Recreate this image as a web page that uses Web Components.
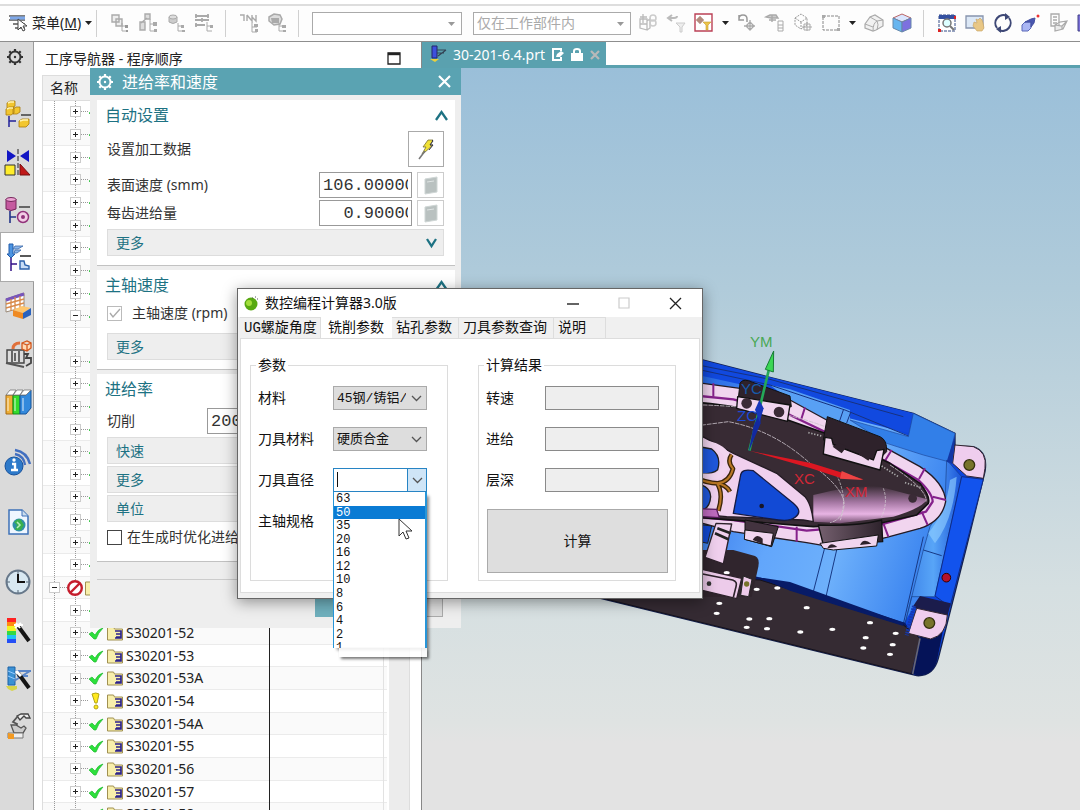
<!DOCTYPE html>
<html lang="zh-CN">
<head>
<meta charset="utf-8">
<title>30-201-6.4.prt</title>
<style>
  html, body { margin: 0; height: 100%; overflow: hidden; }
  body { font: 14px/20px "Noto Sans", "Noto Sans CJK SC", sans-serif; color: #222; background: #fff; }
</style>
</head>
<body>
<nx-app></nx-app>
<script>
const ICONS = {
  menu: '<path d="M1 3h16M1 7h16M5 11h12M7 15h10" stroke="#555" stroke-width="1.6"/><path d="M2 5h15" stroke="#7da7e8" stroke-width="3"/><path d="M10 6v11l3-3 2 4 2-1-2-4h4z" fill="#fff" stroke="#444"/>',
  t1: '<path d="M2 2h7v7H2zM6 6h6v7H6z" fill="#eee" stroke="#aaa" stroke-width="1.4"/><path d="M12 10v8h5M12 13h4" stroke="#aaa" fill="none"/><path d="M15 12h3v3h-3zM16 17h2v2h-2z" fill="#999"/>',
  t2: '<path d="M2 9h5v8H2zM7 1h5v5H7zM9 5l-6 5" fill="#ddd" stroke="#aaa" stroke-width="1.4"/><path d="M12 6v12h5M12 11h5" stroke="#aaa" fill="none"/><path d="M15 9h4v4h-4zM16 16h3v3h-3z" fill="#aaa"/>',
  t3: '<path d="M3 4v5q4 3 8 0V4" fill="#ccc" stroke="#aaa"/><ellipse cx="7" cy="4" rx="4" ry="2" fill="#ddd" stroke="#aaa"/><path d="M12 10v8h5M12 13h4" stroke="#aaa" fill="none"/><path d="M15 12h3v3h-3zM16 17h3v2h-3z" fill="#aaa"/>',
  t4: '<path d="M1 3h14M1 7h14M1 12h10M2 1v4M14 1v4M2 10v4M8 5v4" stroke="#aaa" stroke-width="1.8"/><path d="M13 9v9h5M13 13h4" stroke="#aaa" fill="none"/><path d="M16 12h3v3h-3z" fill="#aaa"/>',
  t5: '<path d="M1 2h4v6M8 2v6M8 2l5 6V2M17 2v6l-4-4" stroke="#aaa" stroke-width="1.4" fill="none"/><path d="M13 9v10h5M13 14h5" stroke="#aaa" fill="none"/><path d="M15 11h4v3h-4zM16 16h3v3h-3z" fill="#aaa"/>',
  t6: '<path d="M2 4l5-3 6 1 2 4-2 5-6 1-5-4z" fill="#ddd" stroke="#aaa" stroke-width="1.5"/><path d="M4 5h8v5H5z" fill="#aaa"/><path d="M12 10v8h5M12 13h4" stroke="#aaa" fill="none"/><path d="M15 12h4v3h-4zM16 17h3v2h-3z" fill="#aaa"/>',
  u1: '<path d="M2 6h7v5H2zM2 11h7v6l-7-2zM9 8l3-2v9l-3 2M5 1v9M2 4h7" fill="none" stroke="#bbb" stroke-width="1.3"/><circle cx="15" cy="5" r="3" fill="none" stroke="#ccc" stroke-width="1.6"/><circle cx="15" cy="10" r="3" fill="none" stroke="#ccc" stroke-width="1.6"/>',
  u2: '<path d="M6 2L2 5l4 3M2 5h6q3 0 3-2" fill="none" stroke="#bbb" stroke-width="2"/><path d="M10 10h9l-3 4v5h-2v-5z" fill="#eee" stroke="#ccc"/>',
  filter: '<path d="M1 1h17v17H1z" fill="#fff" stroke="#bb4055" stroke-width="1.4"/><path d="M6 3v8M2 7h8M4 5h4v4H4z" fill="none" stroke="#965"/><path d="M9 9h8l-3 3v5h-2v-5z" fill="#ecc54a" stroke="#c79c2e" stroke-width=".6"/>',
  u3: '<path d="M2 6q0-4 4-4t4 4v3M2 2v5h5" fill="none" stroke="#999" stroke-width="1.5"/><path d="M13 7v11M7 13h11M13 9l4 4-4 4-4-4z" fill="none" stroke="#aaa" stroke-width="1.3"/>',
  u4: '<path d="M1 4l4-2h6l2 3H6zM7 2v7M4 7h7" fill="#ccc" stroke="#aaa" stroke-width="1.4"/><path d="M13 8h5v10h-5zM13 12h5M13 15h5" fill="none" stroke="#aaa"/>',
  u5: '<path d="M2 5l6-4 6 4v7l-6 4-6-4zM2 5l6 4 6-4M8 9v7" fill="none" stroke="#999" stroke-dasharray="2 1"/><path d="M14 9v9M9 14h10M11 11h6v6h-6z" fill="none" stroke="#aaa"/>',
  u6: '<path d="M2 3h16v14H2z" fill="none" stroke="#888" stroke-dasharray="3 1"/><path d="M1 2h3v3H1zM16 15h3v3h-3z" fill="#aaa"/>',
  u7: '<path d="M1 11l5-7 5-2 8 5v6l-7 4-3 1-8-3z" fill="#f1f1f1" stroke="#aaa" stroke-width="1.2"/><path d="M6 4l7 4q-4 2-4 10M13 8l6-1M13 8q2 3 0 9M1 11l8 3" stroke="#aaa"/>',
  cube: '<path d="M1 5l9-4 9 4-9 4z" fill="#d9e6ff" stroke="#b66"/><path d="M1 5l9 4v10l-9-4z" fill="#67b5ef" stroke="#68a"/><path d="M19 5l-9 4v10l9-4z" fill="#7d71df" stroke="#68a"/>',
  v1: '<path d="M2 2h16v16H2z" fill="#fff" stroke="#334a86" stroke-dasharray="3 1"/><path d="M2 2h16v4H2z" fill="#3450a0"/><circle cx="10" cy="10" r="4" fill="#dff" stroke="#777" stroke-width="1.5"/><path d="M13 13l4 4" stroke="#777" stroke-width="2"/><path d="M17 3h2v3h-2zM1 16h3v3H1z" fill="#d22"/>',
  v2: '<path d="M1 3h17v12H1z" fill="#dce8f6" stroke="#8794ad" stroke-width="1.3"/><path d="M9 9l3 1-1-4 2 1 2-2 2 2 1 3 1 5-2 3h-5l-4-5z" fill="#e8c786" stroke="#c6a15f" stroke-width=".6"/>',
  v3: '<path d="M4 15A8 8 0 0 1 14 3M16 5A8 8 0 0 1 6 17" fill="none" stroke="#3e4876" stroke-width="2"/><path d="M12 0l5 4-5 3zM8 20l-5-4 5-3z" fill="#3e4876"/>',
  v4: '<path d="M1 12l3-3h6v6l-3 3H1z" fill="#aab6f4" stroke="#5a68b8"/><path d="M4 9l6-3 4-1-1 5-3 4V9z" fill="#4a57b0" stroke="#4450a0"/><circle cx="17" cy="3" r="1.5" fill="#e33"/>',
  v5: '<path d="M2 1h8v12H2zM4 4h4M4 7h4M4 10h4" fill="none" stroke="#aaa" stroke-width="1.3"/><path d="M6 12l5-3 7-1-4 8-8 2zM6 12l7 1 5-5M13 13v3" fill="#ececec" stroke="#aaa" stroke-width="1.2"/>',
  v6: '<path d="M1 2h10v16H1z" fill="#7a6fd8" stroke="#448"/>',
  gear: '<g fill="none" stroke="currentColor"><circle cx="10" cy="10" r="5.5" stroke-width="2"/><path d="M10 2v3M10 15v3M2 10h3M15 10h3M4.300 4.300l2 2M13.700 13.700l2 2M4.300 15.700l2-2M13.700 6.300l2-2" stroke-width="2.200"/></g><circle cx="10" cy="10" r="1.200" fill="currentColor"/>',
  asm: '<path d="M4 15V26M4 20h7" stroke="#229" stroke-width="1.5"/><path d="M16 14h10" stroke="#333" stroke-width="1.4"/><g fill="#f2c62f" stroke="#a97b0c" stroke-width=".8"><path d="M2 2l3-2h5v5l-3 2H2zM1 8l3-2h5v6l-3 2H1zM8 8l3-2h4v5l-3 2H8zM14 20l3-2h7v5l-3 3h-7z"/></g><path d="M3 2l2-1h4M2 8l2-1h4M15 20l3-1h5" stroke="#fff3b0" stroke-width="1.4"/>',
  cons: '<path d="M2 1l9 6-9 6zM24 1l-9 6 9 6z" fill="#1216c4"/><path d="M13 0v27" stroke="#222" stroke-dasharray="5 2"/><path d="M0 16h10v10H0z" fill="#ffed2b" stroke="#333"/><path d="M15 15v11h10z" fill="#c01818" stroke="#711"/>',
  part: '<path d="M1 2v10q5 3 10 0V2" fill="#c55a9f" stroke="#75265b"/><ellipse cx="6" cy="2.500" rx="5" ry="2" fill="#eea5d4" stroke="#75265b"/><path d="M5 14v12M5 20h6" stroke="#238" stroke-width="1.6"/><path d="M14 10h11" stroke="#333" stroke-width="1.4"/><circle cx="18" cy="20" r="5.500" fill="#f2cde6" stroke="#92337b" stroke-width="1.500"/><circle cx="18" cy="20" r="2" fill="#92337b"/>',
  oper: '<path d="M3 0h4v10h2l-4 4-4-4h2z" fill="#4c94e2" stroke="#235caa"/><path d="M9 2h8l-5 3H7zM9 6h6l-4 3H8z" fill="#8eb8ec" stroke="#3b68a8" stroke-width=".8"/><path d="M5 14v13M5 20h6" stroke="#318" stroke-width="1.500"/><path d="M14 12h11" stroke="#222" stroke-width="1.500"/><path d="M14 17h4l1 4 4 1v3h-9z" fill="#c9ddf7" stroke="#2c62ac" stroke-width="1.400"/>',
  feat: '<path d="M1 6l18-6v14L1 19z" fill="#fff" stroke="#987"/><path d="M1 7l18-6" stroke="#75b" stroke-width="3"/><path d="M1 11l18-5M1 15l18-5M6 6v12M10 4v13M15 3v12" stroke="#d98a4a" stroke-width="1.300"/><path d="M8 17l9-4 9 2-8 5z" fill="#ffc66d"/><path d="M8 17l10 3v6L8 23z" fill="#ef8a22"/><path d="M18 20l8-5v7l-8 4z" fill="#2a62bd"/>',
  machine: '<path d="M2 9h17v13H2z" fill="#ddd" stroke="#444" stroke-width="1.400"/><path d="M7 9v13M10 12v8M14 10v11" stroke="#666" stroke-width="2"/><path d="M8 8q0-6 7-6" fill="none" stroke="#e0703a" stroke-width="3"/><path d="M17 2l5-2 4 2v5l-4 3-5-2zM17 2l5 2 4-2M22 4v6" fill="#ffd9b4" stroke="#d4571b" stroke-width="1.300"/><path d="M19 13h4l-2 4h5v5l-5 3" fill="none" stroke="#444" stroke-width="1.800"/><path d="M1 22l18 4" stroke="#555" stroke-width="2"/>',
  books: '<path d="M1 6h7v19H1z" fill="#eeae35" stroke="#a66a14"/><path d="M8 6h7v19H8z" fill="#33dc2c" stroke="#178a17"/><path d="M15 6h6l5-5v18l-5 6h-6z" fill="#3389dc" stroke="#17549a"/><path d="M1 6l4-5h6L8 6zM8 6l4-5h6l-3 5zM15 6l4-5h7l-5 5z" fill="#fff" stroke="#777" stroke-width=".8"/><path d="M3 9v13M10 9v13M18 9v13" stroke="#fff8" stroke-width="1.600"/>',
  info: '<circle cx="9" cy="17" r="9" fill="#2d79c9" stroke="#16519c"/><path d="M7 15h3v6M6 21h7" stroke="#fff" stroke-width="2.400" fill="none"/><circle cx="9" cy="11" r="1.700" fill="#fff"/><path d="M10 5q9 2 10 11M10 1q12 2 15 14" stroke="#426fc0" stroke-width="2.400" fill="none"/>',
  web: '<path d="M4 1h13l6 6v18H4z" fill="#eff6ff" stroke="#3e71b8" stroke-width="1.500"/><path d="M17 1v6h6" fill="#cde" stroke="#3e71b8"/><circle cx="14" cy="16" r="6.500" fill="#2f8fa8"/><path d="M9 13q4-4 7-2l3 5-3 5h-6l2-5z" fill="#39b04e"/><path d="M12 13l3 3-3 3" stroke="#b9ecbd" stroke-width="1.500"/>',
  clock: '<circle cx="13" cy="13" r="11.500" fill="#d8e8f2" stroke="#67788a" stroke-width="2"/><path d="M13 5v8h7" stroke="#111" stroke-width="2" fill="none"/><path d="M13 2v3M13 21v3M2 13h3M21 13h3" stroke="#567"/>',
  spectrum: '<path d="M2 1h9v5H2z" fill="#f22"/><path d="M2 5h9v4H2z" fill="#ff8a12"/><path d="M2 9h9v5H2z" fill="#f4f125"/><path d="M2 14h9v4H2z" fill="#34d941"/><path d="M2 18h9v4H2z" fill="#20c4f2"/><path d="M2 22h9v4H2z" fill="#254ff5"/><path d="M13 9l11 15" stroke="#151515" stroke-width="4"/><path d="M11 6l4 5M10 11l6-5M9 8h9" stroke="#fff" stroke-width="2"/>',
  wizard: '<path d="M3 2h7v18H3z" fill="#3b91d4" stroke="#1d62a6"/><path d="M3 6l7 3M3 11l7 3" stroke="#9cf"/><path d="M1 21h11v3l-5 2-4-2z" fill="#d7d44c"/><path d="M11 6h15M12 11h11M9 16l16-10" stroke="#5b86c8" stroke-width="2"/><path d="M13 8l11 15" stroke="#151515" stroke-width="4"/><path d="M11 6l5 5" stroke="#fff" stroke-width="3"/>',
  robot: '<path d="M12 3l4-2h7l2 4h-4l-2-2-4 4z" fill="#eee" stroke="#444" stroke-width="1.300"/><path d="M13 3L8 9l4 2-1 3" fill="none" stroke="#555" stroke-width="1.800"/><path d="M6 12h5l5 3 3-2 2 2-3 5H9z" fill="#ccc" stroke="#555" stroke-width="1.300"/><path d="M3 20h15v5H3z" fill="#eee" stroke="#777"/><path d="M3 20l6 1v5H3z" fill="#f39a22"/>',
  check: '<path d="M1 9l3-2 3 3q3-6 8-7-5 5-7 11H6z" fill="#2ce03b" stroke="#22b832" stroke-width=".7"/>',
  warn: '<path d="M4 1q4-2 7 0l-2 9H7z" fill="#ffe91e" stroke="#b3a516"/><circle cx="8" cy="14" r="2" fill="#ffe91e" stroke="#b3a516"/>',
  stop: '<circle cx="8" cy="8" r="6.800" fill="#fff" stroke="#c51d2c" stroke-width="2.400"/><path d="M3.500 12.500l9-9" stroke="#c51d2c" stroke-width="2.400"/>',
  folder: '<path d="M.5 2h6l1 2h8v11H.5z" fill="#f8efac" stroke="#a09050"/><path d="M8 6h6v3H9M9 12h5M14 7v6H8" fill="none" stroke="#2c238c" stroke-width="1.700"/>',
  bolt: '<path d="M10 1h5l-3 5h3L6 14l-2 1 4-7H5z" fill="#f0e136" stroke="#777035" stroke-width=".8"/><path d="M7 12l-6 8" stroke="#777" stroke-width="1.600"/><path d="M14 1l1 1-3 4h3l-4 5" stroke="#334" fill="none"/>',
  slab: '<path d="M2 3l12-2v15l-12 2z" fill="#b9c1c0" stroke="#cfd6d5"/><path d="M4 6l7-1" stroke="#dfe4e4"/>',
  up: '<path d="M1 11l5.500-8 5.500 8" fill="none" stroke="#1d7283" stroke-width="2.300"/>',
  down: '<path d="M2 3l4.500 7L11 3" fill="none" stroke="#1d7283" stroke-width="2.300"/>',
  close: '<path d="M1 1l11 11M12 1L1 12" stroke="currentColor" stroke-width="2.200"/>',
  shut: '<path d="M1 1l8 8M9 1L1 9" stroke="#b9b9b9" stroke-width="2.200"/>',
  min: '<path d="M0 7h12" stroke="#222" stroke-width="1.400"/>',
  max: '<path d="M1 1h10v10H1z" fill="none" stroke="#ccc" stroke-width="1.200"/>',
  thin: '<path d="M1 1l11 11M12 1L1 12" stroke="#222" stroke-width="1.300"/>',
  restore: '<path d="M1 1h12v11H1z" fill="none" stroke="#222" stroke-width="1.300"/><path d="M1 2h12" stroke="#222" stroke-width="2.400"/>',
  chevron: '<path d="M2 4l4.500 4.500L11 4" fill="none" stroke="#555" stroke-width="1.300"/>',
  tick: '<path d="M3 7l3 4 7-8" fill="none" stroke="#aaa" stroke-width="1.400"/>',
  tri: '<path d="M0 0h7L3.500 4z" fill="currentColor"/>',
  tool: '<path d="M3 0h5v12H3z" fill="#3d50dd" stroke="#25246d"/><path d="M1 13h9l-4 3z" fill="#ead13c"/><path d="M8 4h9M8 7h7M9 10l8-6" stroke="#345" stroke-width="1.200"/>',
  edit: '<path d="M9 3V1H1v11h8V9" fill="none" stroke="#fff" stroke-width="2"/><path d="M4 9l1-3 4-3 3 2-4 4z" fill="#fff"/>',
  lock: '<path d="M0 5h12v8H0z" fill="#fff"/><path d="M3 5V3q0-2 3-2t3 2v2" fill="none" stroke="#fff" stroke-width="2"/>',
  apple: '<circle cx="7" cy="9" r="6.500" fill="#58a911"/><circle cx="5" cy="8" r="3" fill="#a3de3b"/><path d="M8 3h1M11 2h1M13 4h1" stroke="#555" fill="none"/>'
};

class NxIcon extends HTMLElement {
  connectedCallback() {
    if (this.shadowRoot) return;
    const w = this.getAttribute('w') || 20, h = this.getAttribute('h') || w;
    this.attachShadow({ mode: 'open' }).innerHTML =
      `<style>:host{display:inline-flex;flex:none}svg{display:block;overflow:visible}</style>
       <svg width="${w}" height="${h}" viewBox="0 0 ${w} ${h}" fill="none" aria-hidden="true">${ICONS[this.getAttribute('name')] || ''}</svg>`;
  }
}
customElements.define('nx-icon', NxIcon);

const define = (tag, html) => customElements.define(tag, class extends HTMLElement {
  constructor() {
    super();
    const t = document.createElement('template');
    t.innerHTML = html;
    this.attachShadow({ mode: 'open' }).append(t.content.cloneNode(true));
  }
});

const tb = (...names) => names.map(n => `<button aria-label="${n}"><nx-icon name="${n}"></nx-icon></button>`).join('');
define('nx-toolbar', `
<style>
  :host { display: flex; align-items: center; box-sizing: border-box; flex: none; height: 42px; padding: 5px 0 0 8px;
    overflow: hidden; border-bottom: 1px solid #8e8e8e; background: linear-gradient(#fff 4px, #ddd 4px 6px, #fdfdfd 6px); }
  button { flex: none; padding: 0; border: 0; background: none; font: inherit; color: inherit; display: flex; align-items: center; }
  .menu { gap: 4px; margin-right: 6px; width: 82px; white-space: nowrap; }
  .group { display: flex; flex: none; gap: 8px; align-items: center; }
  .sep { flex: none; width: 1px; height: 27px; background: #d0d0d0; margin: 0 13px 0 11px; }
  .menu + .sep { margin-left: 0; }
  .pick { position: relative; flex: none; margin-right: 11px; color: #999; }
  .pick nx-icon { position: absolute; right: 7px; top: 10px; pointer-events: none; }
  select { appearance: none; box-sizing: border-box; height: 23px; width: 150px; border: 1px solid #aaa; border-radius: 0; background: #fff; font: 14px/20px "Noto Sans", "Noto Sans CJK SC", sans-serif; color: #aaa; padding: 0 3px; display: block; }
  .wide select { width: 158px; } .wide { margin-right: 7px; }
</style>
<button class="menu"><nx-icon name="menu" w="20"></nx-icon><span>菜单(<u>M</u>)</span><nx-icon name="tri" w="7" h="4"></nx-icon></button>
<span class="sep"></span>
<div class="group">${tb('t1', 't2', 't3', 't4')}</div><span class="sep"></span>
<div class="group">${tb('t5', 't6')}</div><span class="sep"></span>
<div class="pick"><select aria-label="类型过滤器"><option></option></select><nx-icon name="tri" w="7" h="4"></nx-icon></div>
<div class="pick wide"><select aria-label="选择范围"><option>仅在工作部件内</option></select><nx-icon name="tri" w="7" h="4"></nx-icon></div>
<div class="group">${tb('u1', 'u2', 'filter')}<nx-icon name="tri" w="7" h="4"></nx-icon>${tb('u3', 'u4', 'u5', 'u6')}<nx-icon name="tri" w="7" h="4"></nx-icon>${tb('u7', 'cube')}</div><span class="sep"></span>
<div class="group">${tb('v1', 'v2', 'v3', 'v4', 'v5', 'v6')}</div>`);

const rail = (n, c = '') => `<button class="${c}" aria-label="${n}"><nx-icon name="${n}" w="26"></nx-icon></button>`;
define('nx-rail', `
<style>
  :host { display: flex; flex-direction: column; box-sizing: border-box; flex: none; width: 34px; background: #dadada; border-right: 1px solid #9a9a9a; color: #333; }
  button { flex: none; height: 48px; padding: 0 0 0 3px; border: 0; background: none; color: inherit; display: flex; justify-content: center; align-items: center; }
  .set { height: 30px; margin-bottom: 18px; padding: 0 4px 0 0; } .apart { margin-top: 12px; }
  .on { background: #fff; border: 1px solid #aaa; border-right: 0; margin-right: -1px; height: 50px; margin-top: -2px; }
</style>
<button class="set" aria-label="资源条选项"><nx-icon name="gear"></nx-icon></button>
${rail('asm')}${rail('cons')}${rail('part')}${rail('oper', 'on')}${rail('feat')}${rail('machine')}${rail('books')}
${rail('info', 'apart')}${rail('web', 'apart')}${rail('clock', 'apart')}${rail('spectrum')}${rail('wizard')}${rail('robot')}`);

const names = { 23: '52', 24: '53', 25: '53A', 26: '54', 27: '54A', 28: '55', 29: '56', 30: '57', 31: '58' };
const rows = Array.from({ length: 32 }, (_, i) => {
  if (i === 10) return '<li></li>';
  if (i === 21) return '<li class="parent"><i class="box"></i><i class="dots"></i><nx-icon name="stop" w="16"></nx-icon><nx-icon name="folder" w="16"></nx-icon></li>';
  return `<li><i class="box${i === 9 ? '' : ' plus'}"></i><i class="dots"></i><nx-icon name="${i === 26 ? 'warn' : 'check'}" w="16"></nx-icon>` +
    (names[i] ? `<nx-icon name="folder" w="16"></nx-icon><span>S30201-${names[i]}</span>` : '') + '</li>';
}).join('');
define('nx-navigator', `
<style>
  :host { display: flex; flex-direction: column; box-sizing: border-box; flex: none; width: 388px; padding-left: 8px; border-right: 1px solid #888; background: #fff; overflow: hidden; }
  header { display: flex; flex: none; align-items: center; justify-content: space-between; height: 33px; padding: 0 17px 0 3px; }
  .tree { flex: 1; min-height: 0; display: flex; border-left: 1px solid #ddd; }
  .list { flex: 1; position: relative; }
  .head { box-sizing: border-box; height: 26px; padding: 2px 7px 0; background: #f0f0f0; border: 1px solid #ddd; border-left: 0; }
  ul { margin: 0; padding: 0; list-style: none; display: grid; grid-auto-rows: 1fr; height: 725px; position: relative; }
  ul::before { content: ""; position: absolute; left: 11px; width: 22px; top: 0; bottom: 0; box-sizing: border-box; border-left: 1px dotted #999; border-right: 1px dotted #999; }
  li { display: flex; align-items: center; box-sizing: border-box; padding-left: 27px; border-bottom: 1px solid #ebebeb; }
  li:nth-child(even) { background: #fafafa; }
  li.parent { padding-left: 6px; }
  li.parent nx-icon { margin-right: 2px; }
  nx-icon { margin-right: 3px; position: relative; }
  .box { box-sizing: border-box; width: 11px; height: 11px; border: 1px solid #ccc; position: relative; flex: none;
    background: linear-gradient(#222, #222) center / 5px 1px no-repeat #fff; }
  .plus { background: linear-gradient(#222, #222) center / 5px 1px no-repeat, linear-gradient(#222, #222) center / 1px 5px no-repeat #fff; }
  .dots { width: 7px; border-top: 1px dotted #999; }
  .line { position: absolute; top: 0; bottom: 0; width: 1px; background: #222; left: 226px; }
  .pale { left: 340px; background: #e2e2e2; }
  .scroll { width: 20px; margin: 0 11px 0 2px; background: #ececec; border-right: 1px solid #ddd; }
</style>
<header><span>工序导航器 - 程序顺序</span><nx-icon name="restore" w="14" h="13"></nx-icon></header>
<div class="tree"><div class="list"><div class="head">名称</div><ul>${rows}</ul><i class="line"></i><i class="line pale"></i></div><div class="scroll"></div></div>`);

const holes = [[88,850],[80,880],[200,808],[262,804],[178,897],[238,896],[170,922],[231,926],[350,863],[331,936],[427,928],[540,908],[527,953],[520,984],[617,940],[608,974],[600,1003],[110,758]]
  .map(([x, y]) => `<ellipse cx="${x}" cy="${y}" rx="9" ry="5" fill="#fff"/>`).join('');
define('nx-viewport', `
<style>
  :host { display: flex; flex-direction: column; flex: 1; min-width: 0; overflow: hidden; }
  .tabs { flex: none; height: 23px; display: flex; border-bottom: 3px solid #5aa1af; background: #fff; }
  .tab { display: flex; align-items: center; width: 171px; gap: 7px; padding: 2px 6px 0 7px; background: #5aa1af; color: #fff; white-space: nowrap; }
  .tab span { flex: 1; }
  .canvas { flex: 1; min-height: 0; overflow: hidden; background: linear-gradient(#9abfd9 0, #b0cbda 220px, #d5dfe1 520px, #dfe3e2 655px, #e3e3e3 675px); }
  svg.model { display: block; }
  text { font: 15px "Liberation Sans", sans-serif; }
</style>
<div class="tabs"><div class="tab"><nx-icon name="tool" w="17"></nx-icon><span>30-201-6.4.prt</span><nx-icon name="edit" w="12" h="13"></nx-icon><nx-icon name="lock" w="12" h="13"></nx-icon><nx-icon name="shut" w="10"></nx-icon></div></div>
<div class="canvas">
<svg class="model" width="658" height="742" viewBox="422 68 658 742" role="img" aria-label="30-201-6.4">
  <defs>
    <linearGradient id="floor" x1="0" x2="1" y1="0" y2=".3"><stop stop-color="#1f61e2"/><stop offset=".45" stop-color="#62a6fb"/><stop offset=".7" stop-color="#6db0fb"/><stop offset="1" stop-color="#3d86f0"/></linearGradient>
    <linearGradient id="wall" x1="0" x2="1"><stop stop-color="#3a80e8"/><stop offset=".5" stop-color="#58a5f7"/><stop offset="1" stop-color="#1a54d8"/></linearGradient>
    <linearGradient id="shine" x1="0" x2="0" y1="0" y2="1"><stop stop-color="#382b34"/><stop offset=".45" stop-color="#a779a5"/><stop offset=".75" stop-color="#e8b4e4"/><stop offset="1" stop-color="#745070"/></linearGradient>
    <linearGradient id="side" x1="0" x2="1"><stop stop-color="#75606f"/><stop offset="1" stop-color="#2d222b"/></linearGradient>
  </defs>
  <g transform="translate(690 320) scale(.33333)" stroke-linejoin="round">
    <path d="M-60 96L38 120 240 172 670 280 795 340 795 378 850 380Q895 395 885 455L830 680 745 1015Q730 1070 680 1067L-290 830-100 700z" fill="#0d45dc" stroke="#16224e" stroke-width="4"/>
    <path d="M0 150L240 180 460 270 665 350 670 285 795 340 780 430 810 470 720 780 640 912 0 770z" fill="url(#floor)"/>
    <path d="M38 120L240 172 670 280 655 340 460 290 230 210 0 160z" fill="#1149df"/>
    <path d="M240 195L300 208 480 270 480 300 590 370 480 340 300 240z" fill="#58a0f4"/>
    <path d="M0 143L240 195 465 270 665 352M460 270l-12 35M482 277l-12 32M678 285l-22 67M0 130L240 178 640 290" fill="none" stroke="#17317e" stroke-width="3"/>
    <path d="M670 280L795 340 775 425 700 405 590 370 480 300 655 350z" fill="#327fe8" stroke="#1c499d" stroke-width="2"/>
    <path d="M770 420L815 470 735 830 665 830 645 912 700 690 720 620 765 550z" fill="url(#wall)" stroke="#17408a" stroke-width="2"/>
    <path d="M800 470Q790 600 735 670L715 640Q770 570 780 480z" fill="#8dccff" opacity=".65"/>
    <path d="M815 470L880 478 780 860 735 828z" fill="#1253ed" stroke="#102b86" stroke-width="3"/>
    <path d="M795 375L850 380Q892 395 885 445L880 475 830 468 788 430z" fill="#efcdee" stroke="#33262f" stroke-width="3"/>
    <path d="M795 345L792 378 786 432 770 425z" fill="#1237a5"/>
    <path d="M405 680L370 815M440 690L408 830M700 690L755 707M700 650L640 912" stroke="#173884" stroke-width="3"/>
    <path d="M180 765L260 785 645 908 670 945 200 810z" fill="#071b67"/>
    <path d="M-290 828L0 770 210 780 640 915 690 955 668 1062z" fill="#352b33" stroke="#171219" stroke-width="3"/>
    <path d="M205 772L300 786 640 908 640 918 300 812z" fill="#071b67"/>
    <path d="M0 690L130 690 195 708Q210 715 205 740L185 830 0 830z" fill="#30252d"/>
    ${holes}
    <path d="M690 950L765 900 742 1018Q730 1070 680 1066L664 1060z" fill="#051358"/>
    <path d="M690 955L668 1062" stroke="#667" stroke-width="5"/>
    <path d="M668 860L690 828 782 850 772 890 680 866z" fill="#1b1c4c"/>
    <path d="M680 865L772 885Q770 945 722 957L655 940z" fill="#efcdee" stroke="#33262f" stroke-width="3"/>
    <path d="M672 858l-22 88" stroke="#1538b0" stroke-width="12" stroke-dasharray="5 3"/>
    <circle cx="838" cy="435" r="16" fill="#77742b" stroke="#35320f" stroke-width="4"/><circle cx="718" cy="909" r="16" fill="#77742b" stroke="#35320f" stroke-width="4"/>
    <circle cx="769" cy="773" r="13" fill="#b5122c" stroke="#300" stroke-width="3"/>
    <path d="M0 185L150 205 300 240 410 300 590 385 690 440Q765 490 767 545 755 605 690 625L590 652 450 685 350 668 130 635 0 600z" fill="#f1d5ef" stroke="#241b24" stroke-width="4"/>
    <path d="M0 225L130 238 300 285 590 425 685 480Q728 520 728 545L708 575 580 612 350 632 130 600 0 590" fill="none" stroke="#85218b" stroke-width="7"/>
    <path d="M70 190v40M345 262l-12 38M605 390l-20 32M705 445l-18 32M728 530l40 10M695 575l18 40M320 620v45M580 610l15 40" stroke="#85218b" stroke-width="6"/>
    <path d="M0 245Q160 258 270 292L420 345 600 430 690 490Q722 530 715 550L680 585 560 612 370 620 0 590z" fill="#382b34" stroke="#111" stroke-width="5"/>
    <path d="M370 525Q510 490 570 500L712 538Q695 565 610 590L450 610 370 605z" fill="url(#shine)"/>
    <path d="M580 505q15 40-5 85M440 465q35 70 10 138" fill="none" stroke="#ddd" stroke-width="2" stroke-dasharray="8 4"/>
    <path d="M0 320L115 305Q250 330 360 430 470 510 462 560 455 600 420 608M38 255Q250 260 405 320M600 435Q715 510 708 545" fill="none" stroke="#c9c0c9" stroke-width="2.500" stroke-dasharray="14 3"/>
    <path d="M38 350L130 400 260 460 345 530Q365 555 370 605L340 600 110 590 0 580z" fill="#f0d0ee" stroke="#241b24" stroke-width="4"/>
    <path d="M152 465Q155 445 190 452L310 550Q340 575 315 592 300 605 265 600L130 580z" fill="#124ad5" stroke="#171b42" stroke-width="4"/>
    <path d="M0 375l65 12q30 22 18 62-20 18-83 10zM0 490q60 0 62 40-2 30-20 38L0 565z" fill="#1f58dd" stroke="#222" stroke-width="4"/>
    <path d="M38 368Q95 378 109 405 115 450 80 470L0 468" fill="none" stroke="#f1d5ef" stroke-width="17"/>
    <path d="M125 404q-15 20 4 42-10 40-46 44-30 0-83-22M80 488q22 32 5 84M78 490q30 3 42 25" fill="none" stroke="#3b250a" stroke-width="14"/>
    <path d="M125 404q-15 20 4 42-10 40-46 44-30 0-83-22M80 488q22 32 5 84M78 490q30 3 42 25" fill="none" stroke="#b87724" stroke-width="6"/>
    <path d="M0 565l80 3 8 25-88-5z" fill="#c06bc0" stroke="#571a5b" stroke-width="4"/>
    <path d="M0 610l65 8-12 52-53-12z" fill="#124ad5" stroke="#222" stroke-width="3"/>
    <path d="M78 610L125 612 100 732 45 712z" fill="#f0d0ee" stroke="#2d222b" stroke-width="4"/><path d="M82 625l40 15M75 640l40 18" stroke="#222" stroke-width="8"/>
    <path d="M0 740L155 775 140 836 0 802z" fill="#edcbea" stroke="#2d222b" stroke-width="4"/><path d="M38 762l90 18q15 5 10 20l-8 32" fill="none" stroke="#2d222b" stroke-width="5"/>
    <path d="M160 768l26 10-10 52-24-4z" fill="#edcbea" stroke="#222" stroke-width="3"/><circle cx="170" cy="792" r="8" fill="#77742b"/><circle cx="57" cy="791" r="7" fill="#333"/>
    <path d="M150 190Q155 178 175 182L300 228 304 260 250 270 145 235z" fill="#2e222b" stroke="#111" stroke-width="3"/>
    <path d="M143 230L300 255 292 304 140 265z" fill="#f0d5ee" stroke="#111" stroke-width="4"/><circle cx="170" cy="250" r="16" fill="#3a2b36"/><circle cx="267" cy="276" r="16" fill="#3a2b36"/>
    <path d="M412 290L570 350Q592 360 590 395L560 425 400 360z" fill="#2e222b" stroke="#111" stroke-width="3"/>
    <path d="M405 352L425 355 430 375 550 420 560 392 582 388 570 450 400 402z" fill="#f0d5ee" stroke="#111" stroke-width="4"/><path d="M428 380q20-18 42 0l-15 20zM505 402q24-16 42 2l-12 18z" fill="#2e222b"/>
    <path d="M165 600L265 620 245 680 165 658z" fill="#43333f" stroke="#111" stroke-width="3"/><path d="M165 630L250 640 243 678 163 658z" fill="#f0d5ee" stroke="#111" stroke-width="3"/><path d="M188 660q12-22 30-4v16z" fill="#2e222b"/>
    <path d="M385 615Q500 620 575 600L578 665 400 675z" fill="url(#side)" stroke="#111" stroke-width="4"/><path d="M390 670L565 645 560 678 430 690 400 685z" fill="#f0d5ee" stroke="#111" stroke-width="3"/><path d="M412 685q10-22 30-4zM510 675q10-24 34-4z" fill="#2e222b"/>
    <circle cx="668" cy="535" r="13" fill="#3a2b36"/><circle cx="215" cy="558" r="7" fill="#181525"/>
    <path d="M355 338l40 10M575 438l50 32M645 488l50 15" stroke="#aaa" stroke-width="5" stroke-dasharray="4 5"/>
    <path d="M178 392L240 135" stroke="#24a858" stroke-width="8"/><path d="M251 93L226 148 250 156z" fill="#3bd755" stroke="#177b35" stroke-width="3"/>
    <path d="M176 395L190 320 210 270 212 310z" fill="#1229a0"/><path d="M208 240l13 25-12 40-14-36z" fill="#1736bb"/>
    <path d="M178 392L365 430 520 478 452 474 360 444z" fill="#dc1722"/><path d="M455 453L520 480 450 476z" fill="#e44"/>
  </g>
  <text x="750" y="347" fill="#49a855">YM</text><text x="741" y="394" fill="#175bac">YC</text><text x="737" y="421" fill="#1c48d4">ZC</text>
  <text x="794" y="484" fill="#d22736">XC</text><text x="845" y="497" fill="#d22736">XM</text>
</svg></div>`);

define('nx-section', `
<style>
  :host { display: block; box-sizing: border-box; background: #fff; padding: 5px 11px 9px 10px; border-bottom: 1px solid #c2c2c2; margin-bottom: 4px; }
  header { display: flex; justify-content: space-between; align-items: center; height: 20px; font-size: 16px; color: #1d7283; margin: 0 -4px 0 -2px; }
</style>
<header><slot name="title"></slot><nx-icon name="up" w="13"></nx-icon></header><slot></slot>`);

define('nx-feeds', `
<style>
  :host { display: block; position: absolute; left: 90px; top: 68px; width: 371px; height: 560px; box-sizing: border-box; background: #eee; color: #333; }
  .title { display: flex; align-items: center; height: 27px; padding: 0 10px 0 5px; background: #5aa3b2; color: #fff; font-size: 16px; gap: 7px; }
  .title span { flex: 1; }
  button { padding: 0; border: 0; background: none; color: inherit; font: inherit; display: flex; align-items: center; justify-content: center; }
  .body { padding: 5px 6px 0 7px; }
  .row { display: flex; align-items: center; height: 28px; }
  .row label, .row > span { flex: 1; }
  .row.big { height: 46px; padding-top: 2px; box-sizing: border-box; }
  input[type=text] { box-sizing: border-box; width: 93px; height: 26px; border: 1px solid #999; padding: 0 3px; font: 17px "Liberation Mono", monospace; color: #333; margin: 0; background: #fff; }
  .sq { box-sizing: border-box; width: 27px; height: 26px; border: 1px solid #ccc; margin-left: 5px; }
  .go { width: 36px; height: 36px; box-sizing: border-box; border: 1px solid #aaa; }
  .bar { box-sizing: border-box; width: 100%; height: 27px; margin-top: 2px; background: #eee; border: 1px solid #ddd; color: #1d7283; padding: 0 5px 0 8px; display: flex; align-items: center; justify-content: space-between; }
  .row.check { height: 36px; }
  .check label { margin-left: 10px; }
  .tick { position: relative; display: flex; }
  .tick nx-icon { position: absolute; left: 0; top: 0; pointer-events: none; }
  input[type=checkbox] { appearance: none; box-sizing: border-box; width: 15px; height: 15px; margin: 0; border: 1px solid #444; background: #fff; }
  input:disabled { border-color: #bbb; }
  .cut { margin-top: 8px; } .cut label { flex: 0 0 100px; }
  .last { height: 30px; } .last label { margin-left: 5px; white-space: nowrap; overflow: hidden; }
  .foot { height: 37px; margin: 17px 6px 0 7px; border-top: 1px solid #ccc; display: flex; justify-content: flex-end; gap: 8px; align-items: flex-end; padding-right: 12px; }
  .foot button { width: 60px; height: 26px; border: 1px solid #aaa; background: #ddd; box-sizing: border-box; }
  .foot .ok { background: #6fb0bd; border-color: #6fb0bd; }
</style>
<div class="title"><nx-icon name="gear"></nx-icon><span>进给率和速度</span><button aria-label="关闭"><nx-icon name="close" w="13"></nx-icon></button></div>
<div class="body">
  <nx-section><span slot="title">自动设置</span>
    <div class="row big"><span>设置加工数据</span><button class="go" aria-label="设置加工数据"><nx-icon name="bolt" w="17" h="20"></nx-icon></button></div>
    <div class="row"><label for="s">表面速度 (smm)</label><input id="s" type="text" value="106.00000"><button class="sq" aria-label="公式"><nx-icon name="slab" w="16" h="19"></nx-icon></button></div>
    <div class="row"><label for="z">每齿进给量</label><input id="z" type="text" value="  0.90000"><button class="sq" aria-label="公式"><nx-icon name="slab" w="16" h="19"></nx-icon></button></div>
    <button class="bar">更多<nx-icon name="down" w="13"></nx-icon></button>
  </nx-section>
  <nx-section><span slot="title">主轴速度</span>
    <div class="row check"><span class="tick" style="flex:none"><input id="r" type="checkbox" checked disabled><nx-icon name="tick" w="15"></nx-icon></span><label for="r">主轴速度 (rpm)</label></div>
    <button class="bar">更多</button>
  </nx-section>
  <nx-section><span slot="title">进给率</span>
    <div class="row cut"><label for="c">切削</label><input id="c" type="text" value="2000.000"></div>
    <button class="bar">快速</button><button class="bar">更多</button><button class="bar">单位</button>
    <div class="row last"><input id="o" type="checkbox"><label for="o">在生成时优化进给率</label></div>
  </nx-section>
</div>
<div class="foot"><button class="ok" aria-label="确定"></button><button aria-label="取消"></button></div>`);

define('calc-window', `
<style>
  :host { display: block; position: absolute; left: 237px; top: 288px; width: 466px; box-sizing: border-box; border: 1px solid #666; background: #f0f0f0; box-shadow: 0 3px 14px #0006; color: #111; padding: 0 2px 5px; }
  button, select, input { font: inherit; color: inherit; box-sizing: border-box; border-radius: 0; margin: 0; }
  .title { display: flex; align-items: center; height: 28px; margin: 0 -2px; padding: 0 20px 0 6px; background: #fff; }
  .title span { flex: 1; margin-left: 6px; }
  .title button { border: 0; background: none; padding: 0; margin-left: 39px; display: flex; }
  nav { display: grid; grid-template-columns: 81px 71px 67px 95px 52px; height: 21px; }
  nav button { padding: 0 4px; border: 1px solid #ddd; border-width: 1px 1px 0 0; background: #f0f0f0; text-align: left; line-height: 20px; white-space: nowrap; font-family: "Liberation Mono", "Noto Sans CJK SC", sans-serif; }
  nav .on { background: #fff; border-color: #fff; padding-left: 7px; }
  .page { display: grid; grid-template-columns: 1fr 1fr; gap: 30px; padding: 16px 23px 11px 9px; background: #fff; border: 1px solid #ddd; }
  fieldset { box-sizing: border-box; min-width: 0; height: 226px; margin: 0; padding: 11px 16px 0 7px; border: 1px solid #dcdcdc; }
  fieldset.l { padding-right: 20px; }
  legend { padding: 0 2px; margin-left: -2px; line-height: 20px; }
  .f { display: flex; align-items: center; height: 24px; margin-bottom: 17px; }
  .f label { flex: 1; }
  .pick { position: relative; width: 94px; }
  .pick nx-icon { position: absolute; right: 4px; top: 6px; pointer-events: none; }
  select { appearance: none; width: 94px; height: 24px; padding: 0 20px 0 3px; border: 1px solid #aaa; background: #ddd; font: 13px "Liberation Mono", "Noto Sans CJK SC", sans-serif; display: block; }
  .combo { position: relative; display: flex; width: 94px; height: 24px; border: 1px solid #2784c4; box-sizing: border-box; }
  .combo input { border: 0; outline: 0; padding: 0 2px; flex: 1; min-width: 0; background: linear-gradient(#111, #111) 3px 3px / 1px 15px no-repeat #fff; }
  .combo button { width: 19px; padding: 0; border: 0; border-left: 1px solid #2784c4; background: #cfe5f7; display: flex; align-items: center; justify-content: center; }
  .drop { position: absolute; left: -1px; top: 23px; width: 94px; height: 156px; z-index: 2; box-shadow: 3px 3px 3px -1px #0007; }
  .drop::after { content: ""; position: absolute; top: 156px; left: 6px; right: 0; height: 9px; background: #fffd; box-shadow: 2px 2px 3px #0008; }
  .clip { height: 156px; overflow: hidden; box-sizing: border-box; border: solid #2795d8; border-width: 0 2px 0 1px; background: #fff; }
  ul { margin: 0; padding: 0; list-style: none; height: 163px; display: grid; grid-auto-rows: 1fr; font: 12px/14px "Liberation Mono", monospace; }
  li { padding-left: 2px; min-height: 0; overflow: hidden; }
  li[aria-selected=true] { background: #0a7bd4; color: #fff; }
  .out { width: 114px; height: 24px; border: 1px solid #8a8a8a; background: #eee; }
  .run { display: block; width: 181px; height: 64px; margin: 1px 0 0 1px; border: 1px solid #aaa; background: #dedede; }
  .ptr { position: absolute; left: 160px; top: 229px; z-index: 3; }
</style>
<div class="title"><nx-icon name="apple" w="15" h="16"></nx-icon><span>数控编程计算器3.0版</span>
  <button aria-label="最小化"><nx-icon name="min" w="12"></nx-icon></button><button aria-label="最大化"><nx-icon name="max" w="12"></nx-icon></button><button aria-label="关闭"><nx-icon name="thin" w="13"></nx-icon></button></div>
<nav><button>UG螺旋角度</button><button class="on">铣削参数</button><button>钻孔参数</button><button>刀具参数查询</button><button>说明</button></nav>
<div class="page">
  <fieldset class="l"><legend>参数</legend>
    <div class="f"><label for="m">材料</label><div class="pick"><select id="m"><option>45钢/铸铝/</option></select><nx-icon name="chevron" w="13"></nx-icon></div></div>
    <div class="f"><label for="t">刀具材料</label><div class="pick"><select id="t"><option>硬质合金</option></select><nx-icon name="chevron" w="13"></nx-icon></div></div>
    <div class="f"><label for="d">刀具直径</label><div class="combo"><input id="d" type="text" role="combobox" aria-expanded="true" aria-controls="dl"><button aria-label="展开"><nx-icon name="chevron" w="13"></nx-icon></button>
      <div class="drop"><div class="clip"><ul id="dl" role="listbox">${[63, 50, 35, 20, 16, 12, 10, 8, 6, 4, 2, 1].map(n => `<li role="option" aria-selected="${n === 50}">${n}</li>`).join('')}</ul></div></div></div></div>
    <div class="f"><span>主轴规格</span></div>
  </fieldset>
  <fieldset><legend>计算结果</legend>
    <div class="f"><label for="n">转速</label><input id="n" class="out" type="text" readonly></div>
    <div class="f"><label for="f">进给</label><input id="f" class="out" type="text" readonly></div>
    <div class="f"><label for="h">层深</label><input id="h" class="out" type="text" readonly></div>
    <button class="run">计算</button>
  </fieldset>
</div>
<svg class="ptr" width="15" height="22" viewBox="0 0 15 22" aria-hidden="true"><path d="M1 1v17l4-4 3 7 3-1-3-7h6z" fill="#fff" stroke="#333"/></svg>`);

define('nx-app', `
<style>
  :host { display: flex; flex-direction: column; position: relative; height: 100vh; overflow: hidden; }
  main { flex: 1; min-height: 0; display: flex; }
</style>
<nx-toolbar></nx-toolbar>
<main><nx-rail></nx-rail><nx-navigator></nx-navigator><nx-viewport></nx-viewport></main>
<nx-feeds></nx-feeds>
<calc-window></calc-window>`);
</script>
</body>
</html>
